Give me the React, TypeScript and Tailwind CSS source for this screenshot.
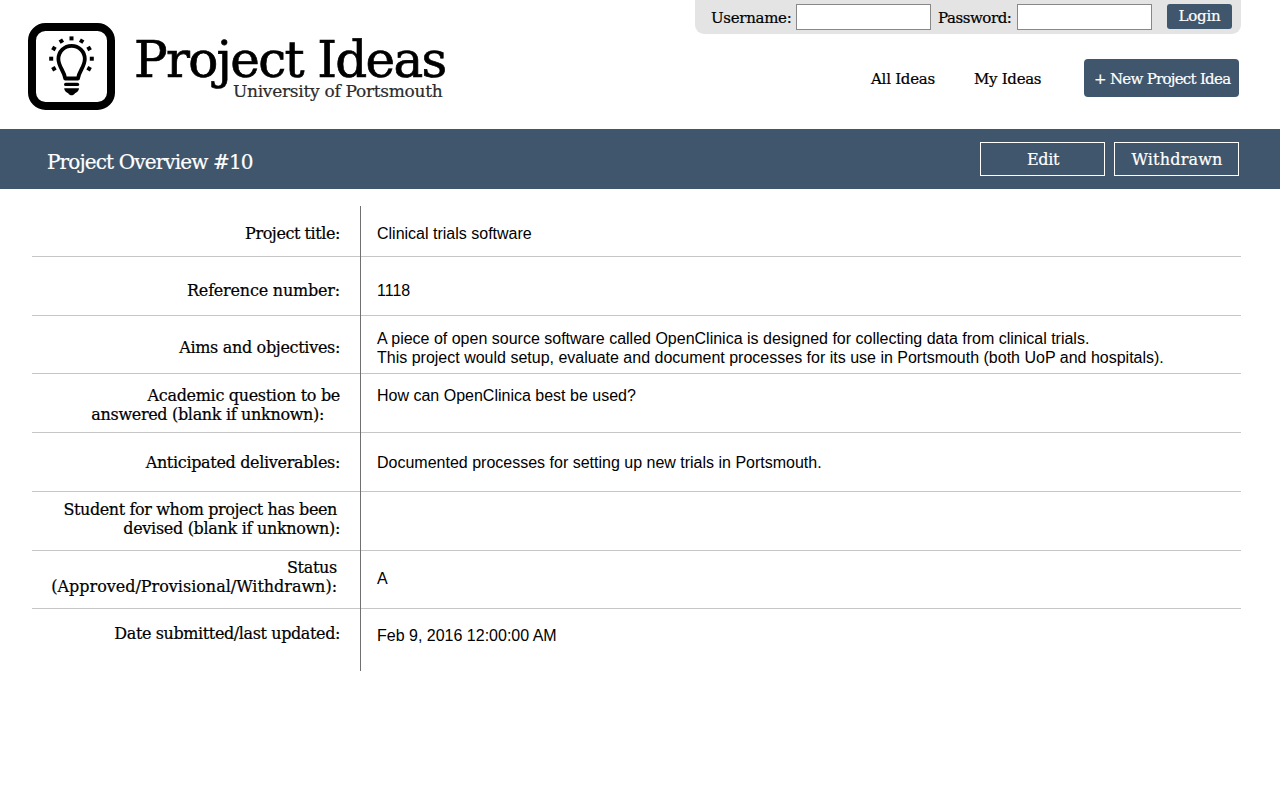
type Line = { text: string; tracking: string };
type Entry = {
  labels: Line[];
  values: string[];
  height: string;
  labelPad: string;
  valuePad: string;
};

const entries: Entry[] = [
  {
    labels: [{ text: "Project title:", tracking: "tracking-[-0.43px]" }],
    values: ["Clinical trials software"],
    height: "h-[51px]",
    labelPad: "pt-[18px] pr-[20px]",
    valuePad: "pt-[18px]",
  },
  {
    labels: [{ text: "Reference number:", tracking: "tracking-[-0.2px]" }],
    values: ["1118"],
    height: "h-[59px]",
    labelPad: "pt-[24px] pr-[20px]",
    valuePad: "pt-[24px]",
  },
  {
    labels: [{ text: "Aims and objectives:", tracking: "tracking-[-0.32px]" }],
    values: [
      "A piece of open source software called OpenClinica is designed for collecting data from clinical trials.",
      "This project would setup, evaluate and document processes for its use in Portsmouth (both UoP and hospitals).",
    ],
    height: "h-[58px]",
    labelPad: "pt-[22px] pr-[20px]",
    valuePad: "pt-[13px]",
  },
  {
    labels: [
      { text: "Academic question to be", tracking: "tracking-[-0.32px]" },
      { text: "answered (blank if unknown):", tracking: "tracking-[-0.33px] pr-4" },
    ],
    values: ["How can OpenClinica best be used?"],
    height: "h-[59px]",
    labelPad: "pt-[12px] pr-[20px]",
    valuePad: "pt-[12px]",
  },
  {
    labels: [{ text: "Anticipated deliverables:", tracking: "tracking-[-0.33px]" }],
    values: ["Documented processes for setting up new trials in Portsmouth."],
    height: "h-[59px]",
    labelPad: "pt-[20px] pr-[20px]",
    valuePad: "pt-[20px]",
  },
  {
    labels: [
      { text: "Student for whom project has been", tracking: "tracking-[-0.39px] pr-[3px]" },
      { text: "devised (blank if unknown):", tracking: "tracking-[-0.31px]" },
    ],
    values: [],
    height: "h-[59px]",
    labelPad: "pt-[8px] pr-[20px]",
    valuePad: "pt-[8px]",
  },
  {
    labels: [
      { text: "Status", tracking: "tracking-[-0.3px]" },
      { text: "(Approved/Provisional/Withdrawn):", tracking: "tracking-[-0.02px]" },
    ],
    values: ["A"],
    height: "h-[58px]",
    labelPad: "pt-[7px] pr-[23px]",
    valuePad: "pt-[18px]",
  },
  {
    labels: [{ text: "Date submitted/last updated:", tracking: "tracking-[-0.39px]" }],
    values: ["Feb 9, 2016 12:00:00 AM"],
    height: "h-[62px]",
    labelPad: "pt-[15px] pr-[20px]",
    valuePad: "pt-[17px]",
  },
];

const rays = [-120, -90, -60, -30, 0, 30, 60, 90, 120];

function Logo() {
  return (
    <svg className="h-[87px] w-[87px] shrink-0" viewBox="0 0 87 87" fill="none">
      <rect x="4" y="4" width="79" height="79" rx="13.5" stroke="#000" strokeWidth="8" />
      {rays.map((a) => (
        <rect key={a} x="41.5" y="13.400" width="4" height="4" fill="#000" transform={`rotate(${a} 43.5 35.7)`} />
      ))}
      <path
        d="M37.2 55.5C36.3 48 30.4 43.8 30.4 36A13.2 13.2 0 0 1 56.8 36C56.8 43.8 50.9 48 50 55.5Z"
        stroke="#000"
        strokeWidth="3.8"
        strokeLinejoin="round"
      />
      <path d="M37.7 61.4H49.500" stroke="#000" strokeWidth="3.4" strokeLinecap="round" />
      <path d="M36.2 65.2H51C51 68 48.7 69.2 47 70.2C45.2 73 42 73 40.200 70.200C38.500 69.200 36.200 68 36.200 65.200Z" fill="#000" />
    </svg>
  );
}

export default function App() {
  return (
    <div className="h-[800px] w-[1280px] overflow-hidden bg-white font-['DejaVu_Serif',serif] text-black [-webkit-text-stroke:0.2px_currentColor]">
      <header className="flex h-[129px] justify-between pl-7 pr-[39px]">
        <div className="flex pt-[23px]">
          <Logo />
          <div className="w-[330px] whitespace-nowrap pl-[19px] pt-[14px]">
            <h1 className="text-[50px] leading-[46px] tracking-[-1.7px] [-webkit-text-stroke:0.7px_#000]">Project Ideas</h1>
            <p className="pl-[99px] text-[17px] leading-4 tracking-[-0.28px] text-[#2b2b2b]">University of Portsmouth</p>
          </div>
        </div>
        <div className="flex w-[546px] flex-col">
          <form className="flex h-[34px] rounded-b-[9px] bg-[#e4e4e4] pl-4 pt-1 text-[15px]">
            <label className="w-[85px] whitespace-nowrap pt-1 leading-5 tracking-[-0.3px]">Username:</label>
            <input className="h-[26px] w-[135px] border border-[#888] bg-white" />
            <label className="ml-[7px] w-[79px] whitespace-nowrap pt-1 leading-5 tracking-[-0.45px]">Password:</label>
            <input type="password" className="h-[26px] w-[135px] border border-[#888] bg-white" />
            <button type="button" className="ml-[15px] h-[25px] w-[65px] rounded-[3px] bg-[#3f566d] leading-[25px] tracking-[-0.25px] text-white">
              Login
            </button>
          </form>
          <nav className="flex items-start whitespace-nowrap pl-[176px] pt-[25px] text-[15px] leading-[38px]">
            <a className="w-[103px] pt-px tracking-[-0.25px]">All Ideas</a>
            <a className="w-[110px] pt-px tracking-[-0.3px]">My Ideas</a>
            <a className="h-[38px] w-[155px] rounded-[4px] bg-[#3f566d] pl-[10px] pt-px tracking-[-0.72px] text-white">+ New Project Idea</a>
          </nav>
        </div>
      </header>

      <section className="flex h-[60px] bg-[#3f566d] pl-[47px] pr-[41px] text-white">
        <h2 className="flex-1 pt-[19px] text-[20px] leading-7 tracking-[-0.87px]">Project Overview #10</h2>
        <div className="flex gap-[9px] pt-[13px] text-base">
          <button className="h-[34px] w-[125px] border border-white pl-px pt-px leading-8 tracking-[-0.4px]">Edit</button>
          <button className="h-[34px] w-[125px] border border-white pl-px pt-px leading-8 tracking-[0.2px]">Withdrawn</button>
        </div>
      </section>

      <main className="flex flex-col whitespace-nowrap pl-8 pr-[39px] pt-[17px] text-base leading-[19px]">
        {entries.map((e, i) => {
          const line = i < entries.length - 1 ? "border-b border-[#c6c6c6]" : "";
          return (
            <div key={i} className={`flex ${e.height}`}>
              <div className={`w-[328px] text-right ${line} ${e.labelPad}`}>
                {e.labels.map((l) => (
                  <div key={l.text} className={l.tracking}>{l.text}</div>
                ))}
              </div>
              <div className="w-px bg-[#707070]" />
              <div className={`flex-1 pl-4 font-['Liberation_Sans',sans-serif] [-webkit-text-stroke:0px] ${line} ${e.valuePad}`}>
                {e.values.map((v) => (
                  <div key={v}>{v}</div>
                ))}
              </div>
            </div>
          );
        })}
      </main>
    </div>
  );
}
